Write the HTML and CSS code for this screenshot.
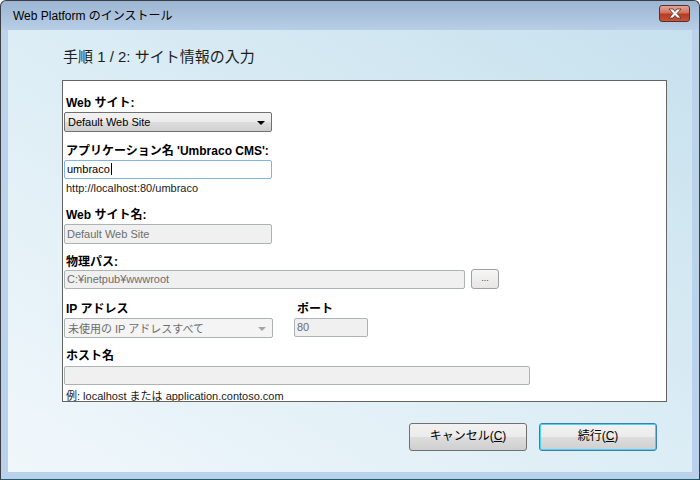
FILE: index.html
```html
<!DOCTYPE html>
<html lang="ja">
<head>
<meta charset="UTF-8" />
<title>Web Platform のインストール</title>
<link rel="stylesheet" href="styles.css">
</head>
<body>

  <div class="window">
    <div class="titlebar">
      <span class="title">Web Platform のインストール</span>
      <div class="close-btn">
        <svg width="16" height="11" viewBox="0 0 16 11">
          <path d="M2 1 L6 1 L8 3.5 L10 1 L14 1 L10 5.5 L14 10 L10 10 L8 7.5 L6 10 L2 10 L6 5.5 Z"
                fill="#ffffff" stroke="#5a2a22" stroke-width="0.8" stroke-linejoin="round" />
        </svg>
      </div>
    </div>

    <div class="client">
      <h1 class="step-title">手順 1 / 2: サイト情報の入力</h1>

      <div class="panel">
        <div class="label first">Web サイト:</div>
        <div class="select">
          <span>Default Web Site</span>
          <span class="arrow"></span>
        </div>

        <div class="label">アプリケーション名 'Umbraco CMS':</div>
        <div class="textbox focused">umbraco<span class="caret"></span></div>
        <div class="hint">http://localhost:80/umbraco</div>

        <div class="label site-name">Web サイト名:</div>
        <div class="textbox disabled tall">Default Web Site</div>

        <div class="label path-label">物理パス:</div>
        <div class="path-row">
          <div class="textbox disabled path">C:¥inetpub¥wwwroot</div>
          <div class="browse-btn">...</div>
        </div>

        <div class="ip-row">
          <div class="ip-col">
            <div class="label">IP アドレス</div>
            <div class="select disabled">
              <span>未使用の IP アドレスすべて</span>
              <span class="arrow"></span>
            </div>
          </div>
          <div class="port-col">
            <div class="label">ポート</div>
            <div class="textbox disabled port">80</div>
          </div>
        </div>

        <div class="label host-label">ホスト名</div>
        <div class="textbox disabled host"></div>
        <div class="hint example">例: localhost または application.contoso.com</div>
      </div>

      <div class="actions">
        <div class="button">キャンセル(<u>C</u>)</div>
        <div class="button default">続行(<u>C</u>)</div>
      </div>
    </div>
  </div>

</body>
</html>
```

FILE: styles.css
```css
body {
  margin: 0;
  width: 700px;
  height: 480px;
  overflow: hidden;
  background: #ffffff;
  font-family: "Liberation Sans", "Noto Sans CJK JP", sans-serif;
  font-size: 12px;
  color: #000000;
}

.window {
  box-sizing: border-box;
  width: 700px;
  height: 480px;
  display: flex;
  flex-direction: column;
  border: 1px solid #3b3f45;
  border-bottom-color: #1f5d6b;
  border-radius: 6px 6px 0 0;
  background: linear-gradient(to bottom, #9cb5d2 0px, #b7cee6 29px, #bcd3ea 29px, #b9d1ea 100%);
}

/* title bar */
.titlebar {
  height: 29px;
  display: flex;
  align-items: center;
  padding: 0 9px 0 12px;
}

.title {
  font-size: 12px;
  color: #000000;
  margin-top: -2px;
}

.close-btn {
  margin-left: auto;
  margin-top: -4px;
  box-sizing: border-box;
  width: 31px;
  height: 17px;
  border: 1px solid #5d2d27;
  border-radius: 3px;
  background: linear-gradient(to bottom, #e3a596 0%, #d0715e 45%, #b63b23 55%, #c4553a 100%);
  display: flex;
  justify-content: center;
  align-items: center;
}

/* client area */
.client {
  flex: 1;
  margin: 0 7px 7px 7px;
  background: linear-gradient(to bottom left, #c7e1ee 0%, #dcedf5 50%, #f0f7fb 100%);
  display: flex;
  flex-direction: column;
}

.step-title {
  margin: 0;
  padding: 18px 0 0 55px;
  height: 50px;
  box-sizing: border-box;
  font-size: 15px;
  font-weight: normal;
  line-height: 18px;
  color: #1e1e1e;
}

.panel {
  box-sizing: border-box;
  margin: 0 0 0 54px;
  width: 605px;
  height: 322px;
  border: 1px solid #646464;
  background: #ffffff;
  padding: 15px 0 0 1px;
  overflow: hidden;
}

.label {
  font-weight: bold;
  line-height: 14px;
  height: 14px;
  padding-left: 2px;
  margin-top: 12px;
  margin-bottom: 2px;
  white-space: nowrap;
}

.label.first {
  margin-top: 0;
}

.label.site-name {
  margin-top: 13px;
}

.label.path-label {
  margin-top: 11px;
  margin-bottom: 0;
}

.label.host-label {
  margin-top: 11px;
  margin-bottom: 3px;
}

/* drop-downs */
.select {
  box-sizing: border-box;
  width: 208px;
  height: 20px;
  border: 1px solid #707070;
  border-radius: 2px;
  background: linear-gradient(to bottom, #f2f2f2 0%, #ebebeb 50%, #dddddd 51%, #cfcfcf 100%);
  display: flex;
  align-items: center;
  padding: 0 6px 0 3px;
  font-size: 11px;
}

.select .arrow {
  margin-left: auto;
  width: 0;
  height: 0;
  border-left: 4px solid transparent;
  border-right: 4px solid transparent;
  border-top: 4px solid #000000;
  margin-top: 1px;
}

.select.disabled {
  width: 209px;
  background: #f4f4f4;
  border-color: #adb2b5;
  color: #6d6d6d;
}

.select.disabled .arrow {
  border-top-color: #a6a6a6;
}

/* text boxes */
.textbox {
  box-sizing: border-box;
  width: 208px;
  height: 19px;
  border: 1px solid #abadb3;
  border-radius: 2px;
  background: #ffffff;
  font-size: 11px;
  line-height: 17px;
  padding-left: 2px;
  white-space: nowrap;
}

.textbox.focused {
  border-color: #7eb4ea;
}

.caret {
  display: inline-block;
  width: 1px;
  height: 12px;
  background: #000000;
  vertical-align: -2px;
  margin-left: 1px;
}

.textbox.disabled {
  background: #f0f0f0;
  border-color: #adb2b5;
  color: #6d6d6d;
}

.textbox.tall {
  height: 20px;
  line-height: 18px;
}

.hint {
  margin-top: 2px;
  padding-left: 2px;
  line-height: 14px;
  font-size: 11px;
  color: #1a1a1a;
}

.hint.example {
  margin-top: 4px;
}

/* physical path row */
.path-row {
  display: flex;
  align-items: flex-start;
  gap: 6px;
}

.textbox.path {
  width: 401px;
  margin-top: 1px;
}

.browse-btn {
  box-sizing: border-box;
  width: 28px;
  height: 20px;
  border: 1px solid #a0a0a0;
  border-radius: 3px;
  background: linear-gradient(to bottom, #f6f6f6, #e6e6e6);
  font-size: 9px;
  text-align: center;
  line-height: 16px;
  color: #444444;
}

/* ip / port row */
.ip-row {
  display: flex;
  gap: 21px;
  margin-top: 13px;
}

.ip-row .label {
  margin-top: 0;
}

.port-col .label {
  padding-left: 3px;
}

.textbox.port {
  width: 74px;
}

.textbox.host {
  width: 466px;
}

/* buttons */
.actions {
  display: flex;
  justify-content: flex-end;
  gap: 12px;
  margin-top: 21px;
  padding-right: 35px;
}

.button {
  box-sizing: border-box;
  width: 118px;
  height: 28px;
  border: 1px solid #707070;
  border-radius: 3px;
  background: linear-gradient(to bottom, #f2f2f2 0%, #ebebeb 50%, #dddddd 51%, #cfcfcf 100%);
  text-align: center;
  line-height: 25px;
  font-size: 12px;
  color: #000000;
}

.button u {
  text-decoration: underline;
}

.button.default {
  border-color: #3c7fb1;
  box-shadow: inset 0 0 0 1px #48d1ff;
}
```
